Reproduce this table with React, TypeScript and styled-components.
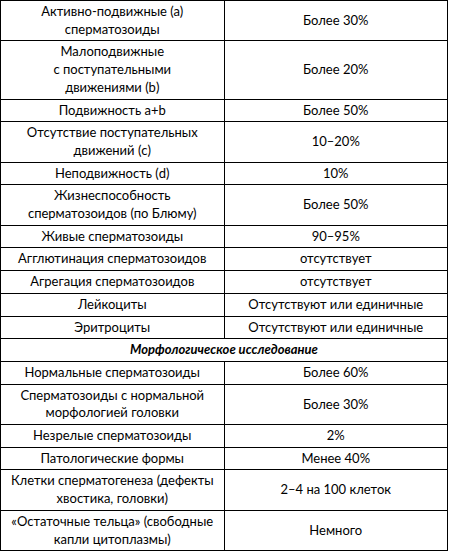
import React from 'react'
import styled, { createGlobalStyle } from 'styled-components'

const GlobalStyle = createGlobalStyle`
  html, body {
    margin: 0;
    padding: 0;
    background: #ffffff;
  }
`

type Row = { name: string; value: string } | { section: string }

const rows: Row[] = [
  { name: 'Активно-подвижные (а)\nсперматозоиды', value: 'Более 30%' },
  { name: 'Малоподвижные\nс поступательными\nдвижениями (b)', value: 'Более 20%' },
  { name: 'Подвижность a+b', value: 'Более 50%' },
  { name: 'Отсутствие поступательных\nдвижений (c)', value: '10–20%' },
  { name: 'Неподвижность (d)', value: '10%' },
  { name: 'Жизнеспособность\nсперматозоидов (по Блюму)', value: 'Более 50%' },
  { name: 'Живые сперматозоиды', value: '90–95%' },
  { name: 'Агглютинация сперматозоидов', value: 'отсутствует' },
  { name: 'Агрегация сперматозоидов', value: 'отсутствует' },
  { name: 'Лейкоциты', value: 'Отсутствуют или единичные' },
  { name: 'Эритроциты', value: 'Отсутствуют или единичные' },
  { section: 'Морфологическое исследование' },
  { name: 'Нормальные сперматозоиды', value: 'Более 60%' },
  { name: 'Сперматозоиды с нормальной\nморфологией головки', value: 'Более 30%' },
  { name: 'Незрелые сперматозоиды', value: '2%' },
  { name: 'Патологические формы', value: 'Менее 40%' },
  { name: 'Клетки сперматогенеза (дефекты\nхвостика, головки)', value: '2–4 на 100 клеток' },
  { name: '«Остаточные тельца» (свободные\nкапли цитоплазмы)', value: 'Немного' },
]

const Table = styled.table`
  width: 448px;
  table-layout: fixed;
  border-collapse: collapse;
  font-family: Lato, 'Noto Sans', sans-serif;
  font-size: 13px;
  line-height: 17.7px;
  color: #000000;
`

const Cell = styled.td`
  width: 50%;
  border: 1px solid #000000;
  padding: 2px 2px;
  text-align: center;
  vertical-align: middle;
  white-space: pre;
`

const SectionCell = styled(Cell)`
  font-weight: bold;
  font-style: italic;
`

const App = () => {
  return (
    <>
      <GlobalStyle />
      <Table>
        <tbody>
          {rows.map((row, i) =>
            'section' in row ? (
              <tr key={i}>
                <SectionCell colSpan={2}>{row.section}</SectionCell>
              </tr>
            ) : (
              <tr key={i}>
                <Cell>{row.name}</Cell>
                <Cell>{row.value}</Cell>
              </tr>
            )
          )}
        </tbody>
      </Table>
    </>
  )
}

export default App
